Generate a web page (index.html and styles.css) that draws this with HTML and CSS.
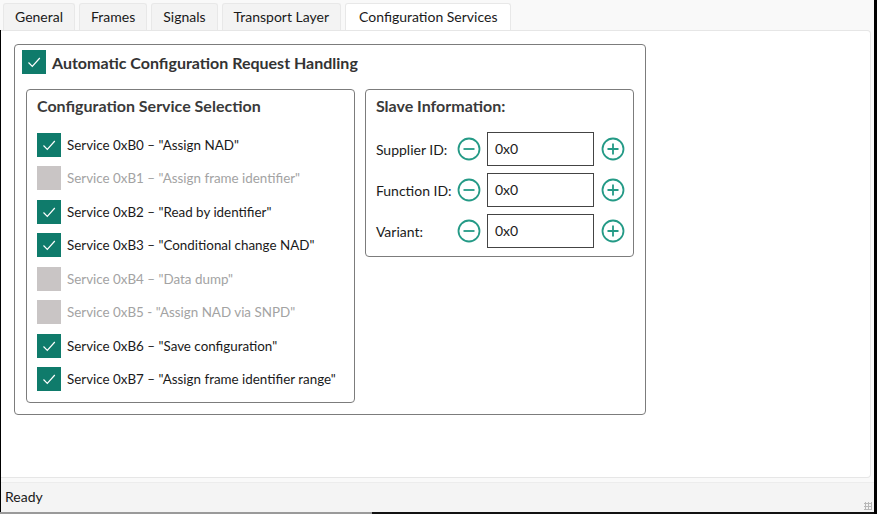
FILE: index.html
```html
<!DOCTYPE html>
<html>
<head>
    <meta charset="UTF-8">
    <title>Configuration Services</title>
    <link rel="stylesheet" href="styles.css">
</head>
<body>
    <div id="window">
        <div id="tabs">
            <div class="tab">General</div>
            <div class="tab">Frames</div>
            <div class="tab">Signals</div>
            <div class="tab">Transport Layer</div>
            <div class="tab active">Configuration Services</div>
        </div>

        <div id="main">
            <div id="pane">
                <div class="group outer">
                    <div class="check_row head">
                        <span class="box on"><svg viewBox="0 0 24 24"><path d="M6.5 12.5l3.8 3.8 7.5-8.3" /></svg></span>
                        <span>Automatic Configuration Request Handling</span>
                    </div>

                    <div class="inner">
                        <div class="group services">
                            <div class="group_title">Configuration Service Selection</div>
                            <div class="check_row"><span class="box on"><svg viewBox="0 0 24 24"><path d="M6.5 12.5l3.8 3.8 7.5-8.3" /></svg></span>Service 0xB0 – "Assign NAD"</div>
                            <div class="check_row off"><span class="box"></span>Service 0xB1 – "Assign frame identifier"</div>
                            <div class="check_row"><span class="box on"><svg viewBox="0 0 24 24"><path d="M6.5 12.5l3.8 3.8 7.5-8.3" /></svg></span>Service 0xB2 – "Read by identifier"</div>
                            <div class="check_row"><span class="box on"><svg viewBox="0 0 24 24"><path d="M6.5 12.5l3.8 3.8 7.5-8.3" /></svg></span>Service 0xB3 – "Conditional change NAD"</div>
                            <div class="check_row off"><span class="box"></span>Service 0xB4 – "Data dump"</div>
                            <div class="check_row off"><span class="box"></span>Service 0xB5 - "Assign NAD via SNPD"</div>
                            <div class="check_row"><span class="box on"><svg viewBox="0 0 24 24"><path d="M6.5 12.5l3.8 3.8 7.5-8.3" /></svg></span>Service 0xB6 – "Save configuration"</div>
                            <div class="check_row"><span class="box on"><svg viewBox="0 0 24 24"><path d="M6.5 12.5l3.8 3.8 7.5-8.3" /></svg></span>Service 0xB7 – "Assign frame identifier range"</div>
                        </div>

                        <div class="group slave">
                            <div class="group_title">Slave Information:</div>
                            <div class="spin_row">
                                <span class="label">Supplier ID:</span>
                                <svg class="round_btn" viewBox="0 0 24 24"><circle cx="12" cy="12" r="10.5" /><path d="M6.5 12h11" /></svg>
                                <div class="field">0x0</div>
                                <svg class="round_btn" viewBox="0 0 24 24"><circle cx="12" cy="12" r="10.5" /><path d="M6.5 12h11M12 6.5v11" /></svg>
                            </div>
                            <div class="spin_row">
                                <span class="label">Function ID:</span>
                                <svg class="round_btn" viewBox="0 0 24 24"><circle cx="12" cy="12" r="10.5" /><path d="M6.5 12h11" /></svg>
                                <div class="field">0x0</div>
                                <svg class="round_btn" viewBox="0 0 24 24"><circle cx="12" cy="12" r="10.5" /><path d="M6.5 12h11M12 6.5v11" /></svg>
                            </div>
                            <div class="spin_row">
                                <span class="label">Variant:</span>
                                <svg class="round_btn" viewBox="0 0 24 24"><circle cx="12" cy="12" r="10.5" /><path d="M6.5 12h11" /></svg>
                                <div class="field">0x0</div>
                                <svg class="round_btn" viewBox="0 0 24 24"><circle cx="12" cy="12" r="10.5" /><path d="M6.5 12h11M12 6.5v11" /></svg>
                            </div>
                        </div>
                    </div>
                </div>
            </div>

            <div id="status">Ready<span class="grip"></span></div>
        </div>
        <div id="edge"></div>
    </div>
</body>
</html>
```

FILE: styles.css
```css
* {
    box-sizing: border-box;
}

body {
    margin: 0;
    width: 877px;
    height: 514px;
    overflow: hidden;
    background: #f9f9f9;
    font-family: "Lato", "Noto Sans", sans-serif;
    color: #1a1a1a;
}

#window {
    height: 514px;
    display: flex;
    flex-direction: column;
    border-right: 3px solid #000;
}

/* tabs */

#tabs {
    display: flex;
    height: 30px;
    padding: 3px 0 0 3px;
    gap: 4px;
}

#tabs .tab {
    height: 27px;
    padding: 0 11px;
    line-height: 26px;
    font-size: 14px;
    background: #f3f3f3;
    border: 1px solid #e8e8e8;
    border-bottom: none;
    border-radius: 3px 3px 0 0;
}

#tabs .tab.active {
    background: #fff;
    padding: 0 13px;
}

#main {
    flex: 1;
    display: flex;
    flex-direction: column;
    border-left: 1px solid #000;
}

#pane {
    height: 448px;
    width: 870px;
    background: #fff;
    border: 1px solid #e6e6e6;
    border-left: none;
    border-radius: 0 4px 4px 0;
    padding: 13px 0 0 13px;
}

/* group boxes */

.group {
    border: 1px solid #7c7c7c;
    border-radius: 4px;
}

.outer {
    width: 632px;
    height: 371px;
    padding: 5px 11px 0 7px;
}

.inner {
    display: flex;
    gap: 10px;
    margin: 15px 0 0 4px;
    align-items: flex-start;
}

.group_title {
    font-size: 16px;
    font-weight: bold;
    color: #3a3a3a;
    line-height: 20px;
    margin-bottom: 16px;
}

.services {
    width: 330px;
    height: 314px;
    padding: 6px 0 0 10px;
}

.services .group_title {
    margin-bottom: 12px;
}

.slave {
    width: 270px;
    height: 168px;
    padding: 6px 0 0 10px;
}

/* checkboxes */

.check_row {
    display: flex;
    align-items: center;
    height: 33.5px;
    font-size: 13.4px;
}

.check_row.off {
    color: #a3a3a3;
}

.check_row.head {
    height: 24px;
    font-size: 16px;
    font-weight: bold;
    color: #333;
}

.box {
    width: 24px;
    height: 24px;
    margin-right: 6px;
    background: #c9c5c5;
    display: flex;
}

.box.on {
    background: #0f7b6b;
}

.box svg {
    width: 24px;
    height: 24px;
    fill: none;
    stroke: #fff;
    stroke-width: 1.2;
}

/* spin rows */

.spin_row {
    display: flex;
    align-items: center;
    height: 34px;
    margin-bottom: 7px;
    font-size: 14px;
}

.spin_row .label {
    width: 81px;
}

.round_btn {
    width: 24px;
    height: 24px;
    fill: none;
    stroke: #249a86;
    stroke-width: 1.8;
}

.field {
    width: 107px;
    height: 34px;
    margin: 0 7px 0 6px;
    border: 1px solid #444;
    padding-left: 7px;
    line-height: 32px;
}

/* status bar */

#status {
    flex: 1;
    margin-top: 4px;
    background: #f4f4f4;
    border-top: 1px solid #ececec;
    font-size: 14px;
    padding: 4px 0 0 4px;
    line-height: 20px;
    position: relative;
}

#status .grip {
    position: absolute;
    right: 2px;
    bottom: 2px;
    width: 8px;
    height: 8px;
    background: radial-gradient(circle, #b8b8b8 1px, transparent 1.2px) 0 0 / 3px 3px;
}

#edge {
    height: 2px;
    background: linear-gradient(to right, #9a9a9a 372px, #111 372px);
}
```
